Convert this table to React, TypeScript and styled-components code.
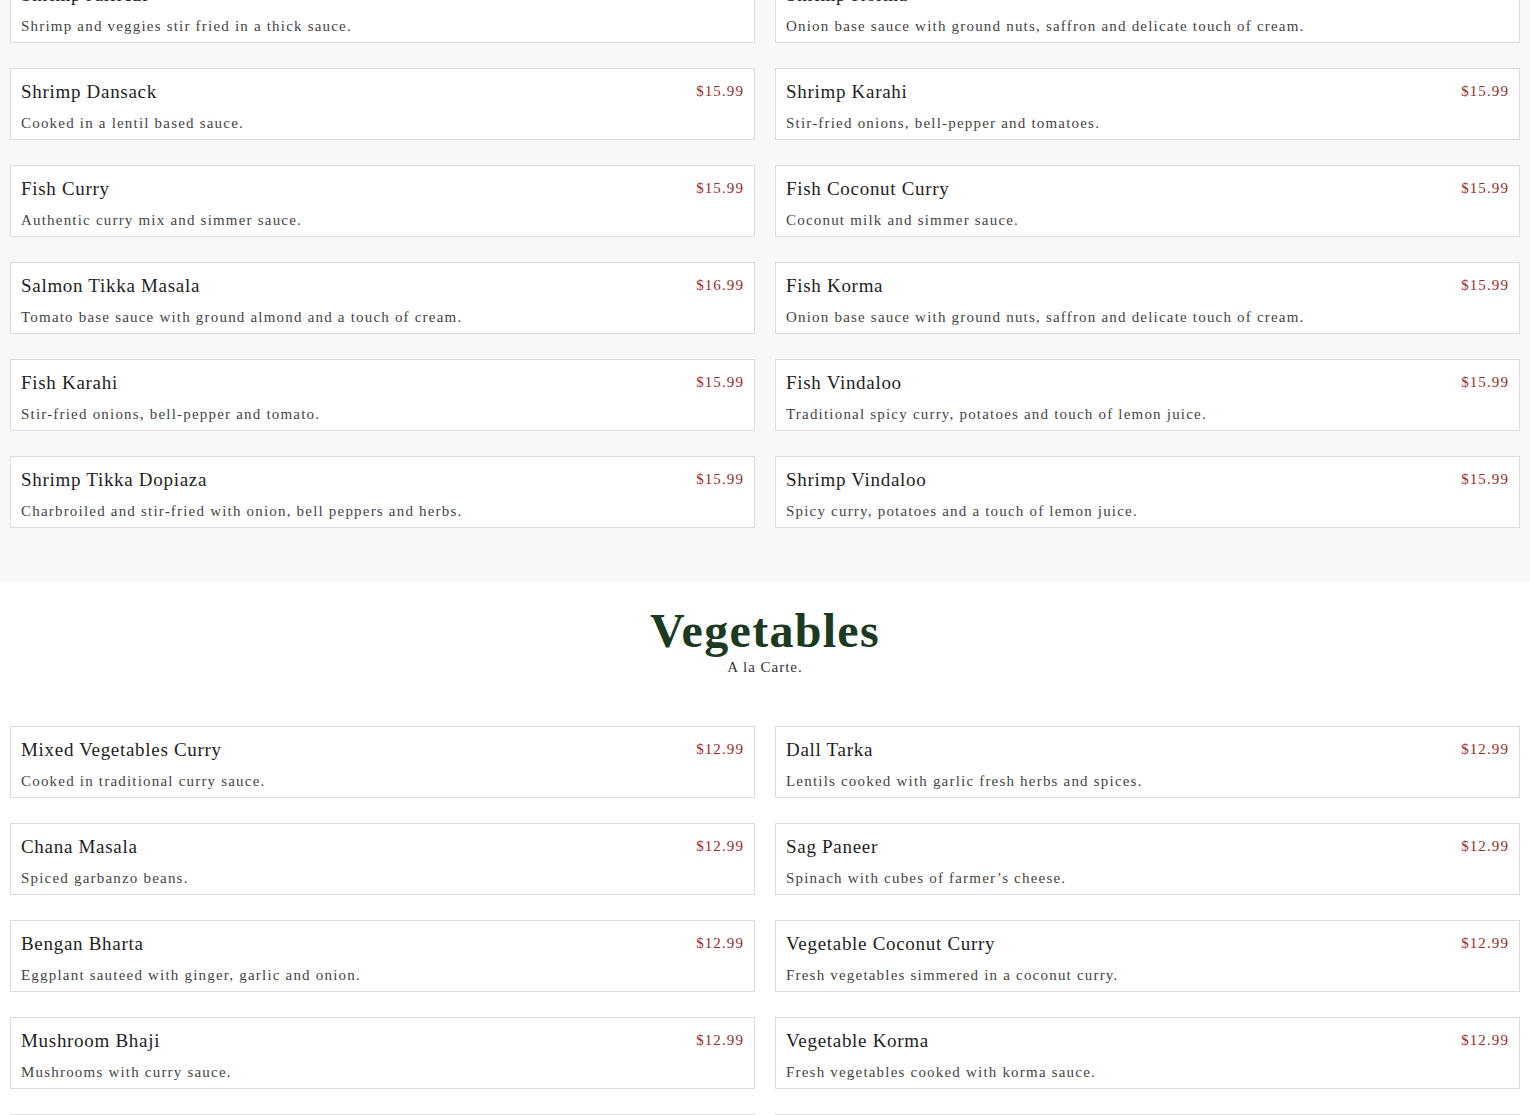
import { FC } from 'react';
import styled, { createGlobalStyle } from 'styled-components';

type Dish = {
  name: string;
  price: string;
  description: string;
};

const seafood: Dish[] = [
  { name: 'Shrimp Jalfrezi', price: '$15.99', description: 'Shrimp and veggies stir fried in a thick sauce.' },
  { name: 'Shrimp Korma', price: '$15.99', description: 'Onion base sauce with ground nuts, saffron and delicate touch of cream.' },
  { name: 'Shrimp Dansack', price: '$15.99', description: 'Cooked in a lentil based sauce.' },
  { name: 'Shrimp Karahi', price: '$15.99', description: 'Stir-fried onions, bell-pepper and tomatoes.' },
  { name: 'Fish Curry', price: '$15.99', description: 'Authentic curry mix and simmer sauce.' },
  { name: 'Fish Coconut Curry', price: '$15.99', description: 'Coconut milk and simmer sauce.' },
  { name: 'Salmon Tikka Masala', price: '$16.99', description: 'Tomato base sauce with ground almond and a touch of cream.' },
  { name: 'Fish Korma', price: '$15.99', description: 'Onion base sauce with ground nuts, saffron and delicate touch of cream.' },
  { name: 'Fish Karahi', price: '$15.99', description: 'Stir-fried onions, bell-pepper and tomato.' },
  { name: 'Fish Vindaloo', price: '$15.99', description: 'Traditional spicy curry, potatoes and touch of lemon juice.' },
  { name: 'Shrimp Tikka Dopiaza', price: '$15.99', description: 'Charbroiled and stir-fried with onion, bell peppers and herbs.' },
  { name: 'Shrimp Vindaloo', price: '$15.99', description: 'Spicy curry, potatoes and a touch of lemon juice.' },
];

const vegetables: Dish[] = [
  { name: 'Mixed Vegetables Curry', price: '$12.99', description: 'Cooked in traditional curry sauce.' },
  { name: 'Dall Tarka', price: '$12.99', description: 'Lentils cooked with garlic fresh herbs and spices.' },
  { name: 'Chana Masala', price: '$12.99', description: 'Spiced garbanzo beans.' },
  { name: 'Sag Paneer', price: '$12.99', description: 'Spinach with cubes of farmer’s cheese.' },
  { name: 'Bengan Bharta', price: '$12.99', description: 'Eggplant sauteed with ginger, garlic and onion.' },
  { name: 'Vegetable Coconut Curry', price: '$12.99', description: 'Fresh vegetables simmered in a coconut curry.' },
  { name: 'Mushroom Bhaji', price: '$12.99', description: 'Mushrooms with curry sauce.' },
  { name: 'Vegetable Korma', price: '$12.99', description: 'Fresh vegetables cooked with korma sauce.' },
  { name: 'Aloo Gobi', price: '$12.99', description: 'Potatoes and cauliflower cooked with spices.' },
  { name: 'Paneer Tikka Masala', price: '$12.99', description: 'Farmer’s cheese in a creamy tomato sauce.' },
];

const GlobalStyle = createGlobalStyle`
  body {
    margin: 0;
    background: #ffffff;
    font-family: "Liberation Serif", "Times New Roman", serif;
    color: #222;
  }
`;

const Page = styled.div`
  width: 1530px;
  overflow: hidden;
`;

const Section = styled.section<{ $muted?: boolean }>`
  background: ${({ $muted }) => ($muted ? '#f8f8f8' : '#ffffff')};
  padding: ${({ $muted }) => ($muted ? '0 10px 54px' : '23px 10px 0')};
`;

const Header = styled.header`
  text-align: center;
  margin-bottom: 49px;
`;

const Heading = styled.h2`
  margin: 0;
  font-size: 48px;
  line-height: 52px;
  font-weight: bold;
  letter-spacing: 1.3px;
  color: #1b3a1f;
`;

const Subheading = styled.p`
  margin: 0;
  font-size: 15px;
  line-height: 20px;
  letter-spacing: 1px;
  color: #333;
`;

const Grid = styled.div<{ $offset?: number }>`
  display: grid;
  grid-template-columns: 1fr 1fr;
  gap: 25px 20px;
  margin-top: ${({ $offset }) => ($offset ? `-${$offset}px` : '0')};
`;

const Card = styled.article`
  background: #fff;
  border: 1px solid #dcdcdc;
  padding: 9px 10px 4px;
`;

const CardTop = styled.div`
  display: flex;
  justify-content: space-between;
  align-items: flex-start;
`;

const Name = styled.h3`
  margin: 0;
  font-size: 19px;
  line-height: 28px;
  font-weight: normal;
  letter-spacing: 0.7px;
  color: #1e1e1e;
`;

const Price = styled.span`
  font-size: 15px;
  line-height: 26px;
  letter-spacing: 1.1px;
  color: #9a2a2a;
`;

const Description = styled.p`
  margin: 5px 0 0;
  font-size: 15px;
  line-height: 24px;
  letter-spacing: 1.2px;
  color: #444;
`;

const DishCard: FC<{ dish: Dish }> = ({ dish }) => (
  <Card>
    <CardTop>
      <Name>{dish.name}</Name>
      <Price>{dish.price}</Price>
    </CardTop>
    <Description>{dish.description}</Description>
  </Card>
);

export default function App() {
  return (
    <Page>
      <GlobalStyle />
      <Section $muted>
        <Grid $offset={29}>
          {seafood.map((dish) => (
            <DishCard key={dish.name} dish={dish} />
          ))}
        </Grid>
      </Section>
      <Section>
        <Header>
          <Heading>Vegetables</Heading>
          <Subheading>A la Carte.</Subheading>
        </Header>
        <Grid>
          {vegetables.map((dish) => (
            <DishCard key={dish.name} dish={dish} />
          ))}
        </Grid>
      </Section>
    </Page>
  );
}
